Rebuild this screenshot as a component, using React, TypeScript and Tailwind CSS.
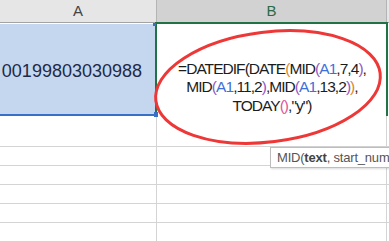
import React from "react";

const font = { fontFamily: '"Liberation Sans", "Noto Sans CJK SC", Arial, sans-serif' };

function Row({ h }: { h: string }) {
  return (
    <div className={`flex ${h} border-b border-[#d4d4d4]`}>
      <div className="w-[157px] shrink-0 border-r border-[#d4d4d4]" />
      <div className="w-[230px] shrink-0 border-r border-[#d4d4d4]" />
      <div className="flex-1" />
    </div>
  );
}

export default function App() {
  const k = "text-[#1c1c1c]";
  const o = "text-[#e0862c]";
  const p = "text-[#9157c4]";
  const b = "text-[#3f6fd8]";
  const m = "text-[#e0559b]";
  return (
    <div className="relative w-[389px] h-[241px] overflow-hidden bg-white" style={font}>
      {/* header */}
      <div className="flex h-[23px] border-b border-[#a3a3a3]">
        <div className="w-[157px] shrink-0 bg-[#e6e6e6] border-r border-[#b4b4b4] flex items-center justify-center text-[15px] text-[#444]">
          A
        </div>
        <div className="w-[230px] shrink-0 bg-[#d2d2d2] border-r border-[#b4b4b4] flex items-center justify-center text-[15px] text-[#2c6a45]">
          B
        </div>
        <div className="flex-1 bg-[#e6e6e6]" />
      </div>

      {/* row 1 */}
      <div className="flex h-[93px]">
        <div className="w-[157px] shrink-0 border-t border-white border-b-2 border-b-[#3a6fc6] bg-[#c5d7ef] overflow-hidden flex items-center justify-end pr-[15px] pt-[4px]">
          <span className="text-[18px] text-[#1e2a48] whitespace-nowrap">00199803030988</span>
        </div>
        <div className="w-[230px] shrink-0 flex items-end justify-center">
          <div className="text-center text-[15.5px] leading-[18.5px] tracking-[-0.95px] pb-[1px]">
            <div>
              <span className={k}>=DATEDIF(DATE</span>
              <span className={o}>(</span>
              <span className={k}>MID</span>
              <span className={p}>(</span>
              <span className={b}>A1</span>
              <span className={k}>,7,4</span>
              <span className={p}>)</span>
              <span className={k}>,</span>
            </div>
            <div>
              <span className={k}>MID</span>
              <span className={p}>(</span>
              <span className={b}>A1</span>
              <span className={k}>,11,2</span>
              <span className={p}>)</span>
              <span className={k}>,MID</span>
              <span className={p}>(</span>
              <span className={b}>A1</span>
              <span className={k}>,13,2</span>
              <span className={p}>)</span>
              <span className={o}>)</span>
              <span className={k}>,</span>
            </div>
            <div>
              <span className={k}>TODAY</span>
              <span className={m}>()</span>
              <span className={k}>,"y")</span>
            </div>
          </div>
        </div>
        <div className="flex-1" />
      </div>

      <Row h="h-[31px]" />
      <Row h="h-[19px]" />
      <Row h="h-[19px]" />
      <Row h="h-[19px]" />
      <Row h="h-[19px]" />
      <Row h="h-[19px]" />

      {/* selection overlays */}
      <div className="absolute left-[155px] top-[22px] w-[233px] h-[94px] border-2 border-b-0 border-[#217346]" />
      <div className="absolute left-[153px] top-[23px] w-[3px] h-[3px] bg-[#3a6fc6]" />
      <div className="absolute left-[154px] top-[112px] w-[4px] h-[5px] bg-[#3a6fc6]" />

      {/* red ellipse annotation */}
      <svg className="absolute inset-0 pointer-events-none" width="389" height="241" viewBox="0 0 389 241">
        <ellipse cx="268" cy="87" rx="113" ry="55" transform="rotate(-7 268 87)" fill="none" stroke="#ee3737" strokeWidth="3" />
      </svg>

      {/* tooltip */}
      <div className="absolute left-[270px] top-[147px] h-[21px] w-[140px] border border-[#bdbdbd] bg-white shadow-[1px_1px_2px_rgba(0,0,0,0.15)] pl-[6px] text-[13px] tracking-[-0.2px] leading-[19px] text-[#555] whitespace-nowrap">
        MID(<b className="text-[#444]">text</b>, start_num
      </div>
    </div>
  );
}
